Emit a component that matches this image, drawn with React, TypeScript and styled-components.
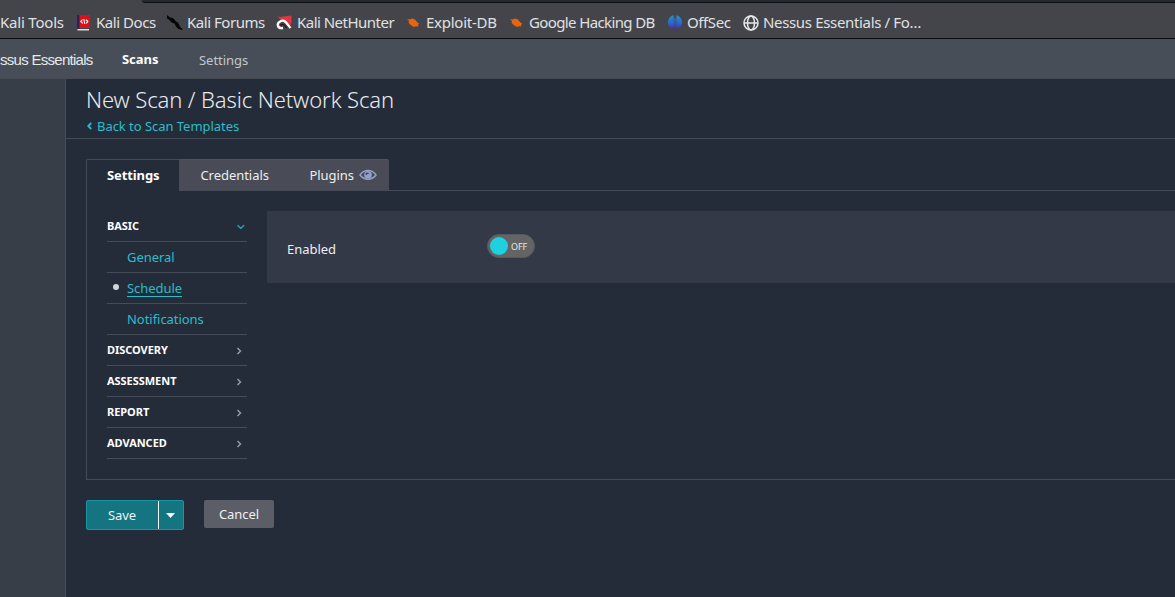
import React from "react";
import styled, { createGlobalStyle } from "styled-components";

const Global = createGlobalStyle`
  * { box-sizing: border-box; }
  html, body { margin: 0; height: 100%; background: #242c3a; }
  body { overflow: hidden; font: 13px/20px "Noto Sans", sans-serif; letter-spacing: -0.04px; color: #eef0f2; }
  button { font: inherit; letter-spacing: inherit; color: inherit; margin: 0; padding: 0; border: 0; cursor: pointer; }
  a { color: #2bbdcb; text-decoration: none; }
  svg { display: block; flex: none; }
`;

const Page = styled.div`
  width: 1175px;
  height: 597px;
  display: flex;
  flex-direction: column;
  overflow: hidden;
`;

const TabEdge = styled.div`
  height: 3px;
  background: #43454b;
  display: flex;
  justify-content: flex-end;
  flex: none;
`;

const TabGap = styled.div`
  width: 1033px;
  height: 3px;
  background: #252931;
  border-bottom: 1px solid #0b0e13;
  border-bottom-left-radius: 3px;
`;

const BookmarkBar = styled.nav`
  height: 36px;
  flex: none;
  display: flex;
  align-items: center;
  background: #43454b;
  border-bottom: 1px solid #0b0c12;
  padding-top: 4px;
  color: #e0e1e2;
  font-size: 15px;
  line-height: 20px;
`;

const Bookmark = styled.div<{ $width: number; $spacing: number }>`
  width: ${(p) => p.$width}px;
  flex: none;
  display: flex;
  align-items: center;
  gap: 4px;
  white-space: nowrap;
  letter-spacing: ${(p) => p.$spacing}px;
`;

const BookmarkLabel = styled.span`
  padding-bottom: 2px;
`;

const AppHeader = styled.header`
  height: 40px;
  flex: none;
  display: flex;
  align-items: center;
  background: #484e57;
  border-bottom: 1px solid #464a53;
`;

const Brand = styled.div`
  width: 122px;
  color: #e6e8ea;
  font: 15px/20px "Liberation Sans", sans-serif;
  letter-spacing: -0.72px;
  white-space: nowrap;
  padding-top: 2px;
`;

const HeaderLink = styled.div<{ $active?: boolean }>`
  width: 77px;
  font-weight: ${(p) => (p.$active ? 700 : 400)};
  color: ${(p) => (p.$active ? "#ffffff" : "#c3c7cb")};
  padding-top: ${(p) => (p.$active ? 0 : 2)}px;
`;

const Body = styled.div`
  flex: 1;
  display: flex;
  min-height: 0;
`;

const Rail = styled.aside`
  width: 66px;
  flex: none;
  background: #383e47;
  border-right: 1px solid #464d59;
`;

const Main = styled.main`
  flex: 1;
  min-width: 0;
`;

const Heading = styled.div`
  height: 60px;
  padding: 5px 0 0 20px;
  border-bottom: 1px solid #454c58;
`;

const Title = styled.h1`
  margin: 0;
  font-size: 22px;
  line-height: 30px;
  font-weight: 300;
  letter-spacing: -0.1px;
  color: #e9ebee;
`;

const BackLink = styled.a`
  display: flex;
  align-items: center;
  gap: 3px;
  width: max-content;
  margin-top: 2px;
`;

const Content = styled.section`
  padding: 20px 0 0 20px;
`;

const Tabs = styled.div`
  display: flex;
  height: 32px;
  border-bottom: 1px solid #454c58;
`;

const Tab = styled.button<{ $active?: boolean; $width: number; $last?: boolean }>`
  width: ${(p) => p.$width}px;
  height: ${(p) => (p.$active ? 32 : 31)}px;
  display: flex;
  align-items: center;
  gap: 5px;
  padding-left: ${(p) => (p.$active ? 20 : 21.4)}px;
  padding-bottom: ${(p) => (p.$active ? 1 : 0)}px;
  background: ${(p) => (p.$active ? "#242c3a" : "#494c56")};
  border: solid ${(p) => (p.$active ? "#454c58" : "#4e535d")};
  border-width: ${(p) => (p.$active ? "1px 0 0 1px" : "1px 0 0 0")};
  border-top-right-radius: ${(p) => (p.$last ? 2 : 0)}px;
  border-top-left-radius: ${(p) => (p.$active ? 2 : 0)}px;
  font-weight: ${(p) => (p.$active ? 700 : 400)};
  letter-spacing: ${(p) => (p.$active ? -0.1 : -0.04)}px;
  color: ${(p) => (p.$active ? "#ffffff" : "#eceef0")};
`;

const Panel = styled.div`
  display: flex;
  height: 289px;
  padding: 20px 0 0 20px;
  border: solid #454c58;
  border-width: 0 0 1px 1px;
`;

const SideMenu = styled.ul`
  width: 140px;
  margin: 0 20px 0 0;
  padding: 0;
  list-style: none;
  flex: none;
`;

const Group = styled.li`
  height: 31px;
  display: flex;
  align-items: center;
  justify-content: space-between;
  border-bottom: 1px solid #454c58;
  font-size: 11px;
  font-weight: 700;
  color: #ffffff;
`;

const SubItem = styled.li`
  height: 31px;
  display: flex;
  align-items: center;
  padding-top: 1px;
  border-bottom: 1px solid #454c58;
`;

const Marker = styled.span<{ $on?: boolean }>`
  width: 6px;
  height: 6px;
  margin: 0 8px 4px 6px;
  border-radius: 50%;
  background: ${(p) => (p.$on ? "#d3d5d8" : "transparent")};
`;

const SubLink = styled.a<{ $on?: boolean }>`
  line-height: 16px;
  border-bottom: 1px solid ${(p) => (p.$on ? "#2bbdcb" : "transparent")};
`;

const Field = styled.div`
  flex: 1;
  height: 72px;
  padding-left: 20px;
  display: flex;
  align-items: center;
  background: #333946;
`;

const FieldLabel = styled.label`
  width: 200px;
  padding-top: 4px;
`;

const Toggle = styled.button`
  width: 48px;
  height: 24px;
  margin-bottom: 2px;
  padding: 1px 0 0 2px;
  display: flex;
  align-items: center;
  gap: 3px;
  border: 1px solid #555962;
  border-radius: 12px;
  background: #646464;
  font-size: 9px;
  color: #e9e9e9;
`;

const Knob = styled.span`
  width: 18px;
  height: 18px;
  margin-bottom: 1px;
  border-radius: 50%;
  background: #1fd0e1;
`;

const Actions = styled.div`
  display: flex;
  gap: 20px;
  margin-top: 20px;
`;

const SplitButton = styled.div`
  display: flex;
  width: 98px;
  height: 30px;
  background: #147581;
  border: 1px solid #1897a3;
  border-radius: 2px;
`;

const SaveButton = styled.button`
  width: 71px;
  padding-right: 1px;
  background: transparent;
`;

const MoreButton = styled.button`
  flex: 1;
  display: flex;
  align-items: center;
  justify-content: center;
  padding-right: 1px;
  border-left: 1px solid #f3f6f7;
  background: transparent;
`;

const CancelButton = styled.button`
  width: 70px;
  height: 28px;
  border-radius: 2px;
  background: #5b5d67;
`;

const DocsIcon = () => (
  <svg width="16" height="16" viewBox="0 0 16 16">
    <path d="M1 0h3v13.500H1z" fill="#30205a" />
    <path d="M3.500 0H14v13H3.500z" fill="#dd1018" />
    <path d="M1.500 14H13v1.500H1.500z" fill="#dedede" />
    <path d="M6.500 4.500L4.800 6.500l2 1.800M7.800 4l1 5M9.800 4.800l2 1.500-1.500 2" fill="none" stroke="#fff" strokeWidth="1.100" />
  </svg>
);

const ForumsIcon = () => (
  <svg width="16" height="16" viewBox="0 0 16 16">
    <path d="M0 0l3 2.500 3 .5 3 3.500 2 1 2 4 3 3.500-4.500-1L9 11.500l-1.500-3L4.500 7.500 2 4.500 0 3.500z" fill="#050505" />
  </svg>
);

const HunterIcon = () => (
  <svg width="17" height="16" viewBox="0 0 17 16">
    <path d="M1 1l3 1 11.500-1.500V8L13 12 5 5z" fill="#df3640" />
    <path d="M2 10c0 3 2 5 5 5l-4-6z" fill="#b5273a" />
    <path d="M7 13C1 14 0 8 5 6c4.500-1.500 6 3 9.500 7" fill="none" stroke="#fff" strokeWidth="2.300" />
    <path d="M4.500 10.500c1.500-2 3.500-1.500 6 2.500" fill="none" stroke="#28151b" strokeWidth="1.300" />
  </svg>
);

const BugIcon = () => (
  <svg width="16" height="16" viewBox="0 0 16 16">
    <path d="M1 4l2.500.5L6 3.500l3 1 2 2.500 2.500 2-1.500.8.300 1.700-2.300-.2L8 12 5.500 10.500 4 9.500 2.500 7.500 3 6z" fill="#e9640f" />
  </svg>
);

const OffSecIcon = () => (
  <svg width="16" height="16" viewBox="0 0 16 16">
    <defs>
      <linearGradient id="offsec" gradientUnits="userSpaceOnUse" x1="0" y1="0" x2="0" y2="16">
        <stop offset="0" stopColor="#2b93b8" />
        <stop offset=".5" stopColor="#2868d4" />
        <stop offset=".9" stopColor="#5a21a8" />
      </linearGradient>
    </defs>
    <path d="M5 .8L6.700.3v12.500l-1.200-.5c-.2.500-.8.700-1.500.7C-.5 11 0 3 5 .8zM7.400 3h1.200v13H7.400zM11 .8L9.300.3v12.500l1.200-.5c.2.500.8.700 1.500.7C16.500 11 16 3 11 .8z" fill="url(#offsec)" />
  </svg>
);

const GlobeIcon = () => (
  <svg width="16" height="16" viewBox="0 0 16 16" fill="none" stroke="#e6e7e8" strokeWidth="1.500">
    <circle cx="8" cy="8" r="7" />
    <ellipse cx="8" cy="8" rx="3.500" ry="7" />
    <path d="M1 8h14" />
  </svg>
);

const EyeIcon = () => (
  <svg width="18" height="12" viewBox="0 0 18 12" fill="none" stroke="#93a0cb">
    <path d="M1 6c4-6 12-6 16 0-4 5.500-12 5.500-16 0z" strokeWidth="1.500" />
    <circle cx="9" cy="5.800" r="3.800" fill="#93a0cb" stroke="none" />
    <path d="M7.300 6V4.300h2.400" stroke="#39405a" strokeWidth="1.200" />
  </svg>
);

const Chevron = ({ open }: { open?: boolean }) =>
  open ? (
    <svg width="12" height="12" viewBox="0 0 12 12" fill="none" stroke="#2ba4b2" strokeWidth="1.400">
      <path d="M2.500 5.300l3.300 3 3.300-3" />
    </svg>
  ) : (
    <svg width="12" height="12" viewBox="0 0 12 12" fill="none" stroke="#9a9fa9" strokeWidth="1.400">
      <path d="M2.500 4l3 3-3 3" />
    </svg>
  );

const bookmarks = [
  { label: "Kali Tools", width: 76, spacing: -0.2 },
  { label: "Kali Docs", width: 91, spacing: -0.45, icon: <DocsIcon /> },
  { label: "Kali Forums", width: 109, spacing: -0.47, icon: <ForumsIcon /> },
  { label: "Kali NetHunter", width: 130, spacing: -0.52, icon: <HunterIcon /> },
  { label: "Exploit-DB", width: 103, spacing: -0.25, icon: <BugIcon /> },
  { label: "Google Hacking DB", width: 158, spacing: -0.62, icon: <BugIcon /> },
  { label: "OffSec", width: 76, spacing: -0.4, icon: <OffSecIcon /> },
  { label: "Nessus Essentials / Fo…", width: 200, spacing: -0.34, icon: <GlobeIcon /> },
];

export default function App() {
  return (
    <>
      <Global />
      <Page>
        <TabEdge><TabGap /></TabEdge>
        <BookmarkBar>
          {bookmarks.map((b) => (
            <Bookmark key={b.label} $width={b.width} $spacing={b.spacing}>
              {b.icon}
              <BookmarkLabel>{b.label}</BookmarkLabel>
            </Bookmark>
          ))}
        </BookmarkBar>
        <AppHeader>
          <Brand>ssus Essentials</Brand>
          <HeaderLink $active>Scans</HeaderLink>
          <HeaderLink>Settings</HeaderLink>
        </AppHeader>
        <Body>
          <Rail />
          <Main>
            <Heading>
              <Title>New Scan / Basic Network Scan</Title>
              <BackLink>
                <svg width="8" height="8" viewBox="0 0 8 8" fill="none" stroke="#2bbdcb" strokeWidth="1.800">
                  <path d="M5.300 1L2.300 4l3 3" />
                </svg>
                <span>Back to Scan Templates</span>
              </BackLink>
            </Heading>
            <Content>
              <Tabs>
                <Tab $active $width={93}>Settings</Tab>
                <Tab $width={109}>Credentials</Tab>
                <Tab $width={101} $last>Plugins <EyeIcon /></Tab>
              </Tabs>
              <Panel>
                <SideMenu>
                  <Group>BASIC <Chevron open /></Group>
                  <SubItem><Marker /><SubLink>General</SubLink></SubItem>
                  <SubItem><Marker $on /><SubLink $on>Schedule</SubLink></SubItem>
                  <SubItem><Marker /><SubLink>Notifications</SubLink></SubItem>
                  {["DISCOVERY", "ASSESSMENT", "REPORT", "ADVANCED"].map((g) => (
                    <Group key={g}>{g} <Chevron /></Group>
                  ))}
                </SideMenu>
                <Field>
                  <FieldLabel>Enabled</FieldLabel>
                  <Toggle><Knob />OFF</Toggle>
                </Field>
              </Panel>
              <Actions>
                <SplitButton>
                  <SaveButton>Save</SaveButton>
                  <MoreButton>
                    <svg width="9" height="5" viewBox="0 0 9 5"><path d="M0 0h9L4.500 5z" fill="#fff" /></svg>
                  </MoreButton>
                </SplitButton>
                <CancelButton>Cancel</CancelButton>
              </Actions>
            </Content>
          </Main>
        </Body>
      </Page>
    </>
  );
}
